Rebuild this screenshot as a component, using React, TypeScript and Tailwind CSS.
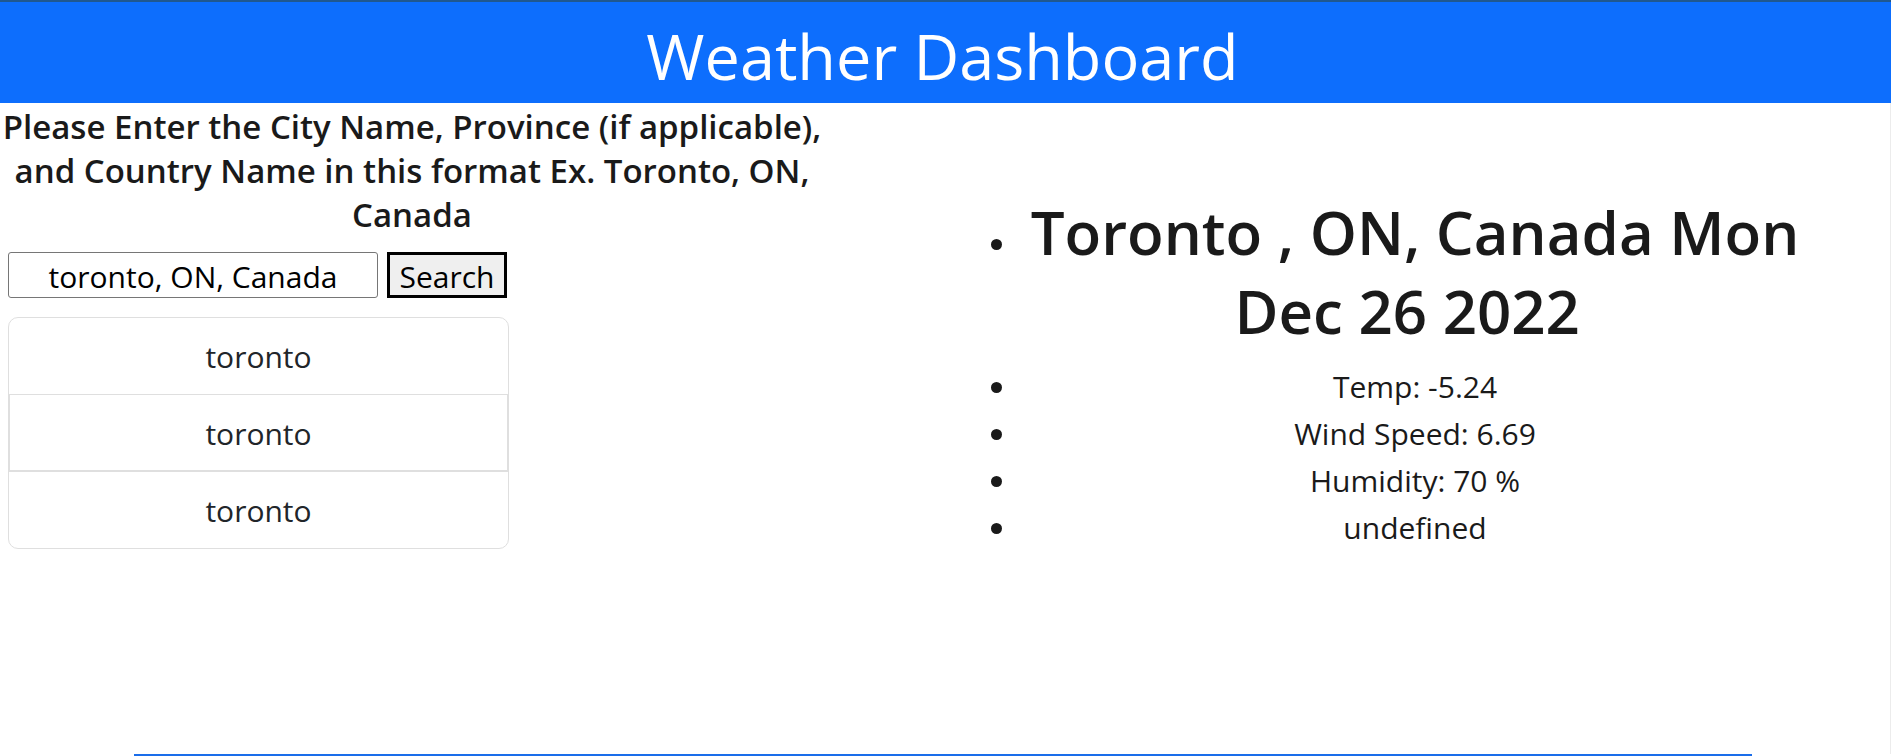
const history = ["toronto", "toronto", "toronto"];

const readings = ["Temp: -5.24", "Wind Speed: 6.69", "Humidity: 70 %", "undefined"];

function SearchPanel() {
  return (
    <section>
      <h2 className="mt-0.5 text-center text-[33px] leading-[44px] font-semibold">
        <label htmlFor="city">
          Please Enter the City Name, Province (if applicable), and Country Name in this format Ex.
          Toronto, ON, Canada
        </label>
      </h2>
      <form className="mt-[15px] ml-2 flex gap-[9px]" onSubmit={(e) => e.preventDefault()}>
        <input
          id="city"
          type="text"
          defaultValue="toronto, ON, Canada"
          className="h-[46px] w-[370px] rounded-[3px] border border-[#767676] bg-white pt-0.5 text-center text-3xl text-black"
        />
        <button
          type="submit"
          className="h-[46px] w-[120px] border-3 border-black bg-[#efefef] pt-0.5 text-3xl leading-10 text-black"
        >
          Search
        </button>
      </form>
      <ul className="mt-[19px] ml-2 w-[501px] rounded-[10px] border border-[#dfdfdf] text-center text-3xl text-[#212529]">
        {history.map((city, i) => (
          <li
            key={i}
            className="border-[#dfdfdf] pt-4 pb-[14px] leading-[46px] even:border even:border-b-2 even:leading-[45px]"
          >
            {city}
          </li>
        ))}
      </ul>
    </section>
  );
}

function WeatherPanel() {
  return (
    <section className="pt-[90px] pr-[79px] pl-[195px]">
      <ul className="list-disc text-center text-3xl leading-[47px]">
        <li>
          <h2 className="mb-3 text-[60px] leading-[79px] font-semibold">
            Toronto , ON, Canada Mon Dec 26 2022&nbsp;
          </h2>
        </li>
        {readings.map((reading) => (
          <li key={reading} className="leading-[47px]">
            {reading}
          </li>
        ))}
      </ul>
    </section>
  );
}

export default function App() {
  return (
    <div className="flex min-h-screen flex-col bg-white font-['Open_Sans',sans-serif] text-[#1a1a1a]">
      <header className="border-t-2 border-[#20588f] bg-[#0d6efd] pt-2 pr-1.5 pb-[1px] text-center text-white">
        <h1 className="text-[63px] leading-[92px]">Weather Dashboard</h1>
      </header>
      <main className="grid flex-1 grid-cols-[824fr_1066fr] border-r border-[#ececec]">
        <SearchPanel />
        <WeatherPanel />
      </main>
      <hr className="mr-[139px] ml-[134px] border-t-2 border-[#1a6dea]" />
    </div>
  );
}
